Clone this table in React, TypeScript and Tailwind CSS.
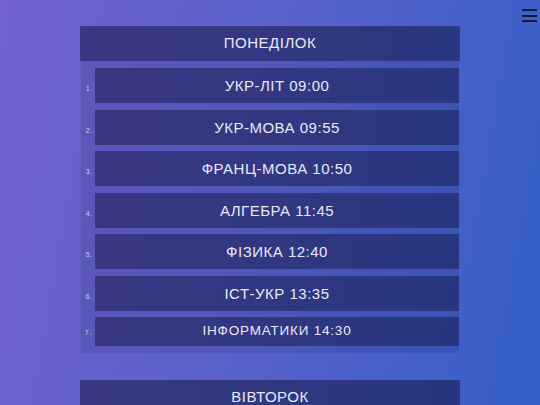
const days = [
  {
    name: "ПОНЕДІЛОК",
    lessons: [
      "УКР-ЛІТ 09:00",
      "УКР-МОВА 09:55",
      "ФРАНЦ-МОВА 10:50",
      "АЛГЕБРА 11:45",
      "ФІЗИКА 12:40",
      "ІСТ-УКР 13:35",
      "ІНФОРМАТИКИ 14:30",
    ],
  },
  {
    name: "ВІВТОРОК",
    lessons: ["ГЕОМЕТРІЯ 09:00", "АНГЛ-МОВА 09:55", "ХІМІЯ 10:50", "БІОЛОГІЯ 11:45"],
  },
]

function Menu() {
  return (
    <button className="fixed top-[9px] right-[3px] flex w-[15px] flex-col gap-[3.5px]">
      <span className="h-[2px] w-full bg-[#16183d]" />
      <span className="h-[2px] w-full bg-[#16183d]" />
      <span className="h-[2px] w-full bg-[#16183d]" />
    </button>
  )
}

export default function App() {
  return (
    <div
      className="min-h-screen w-full bg-[linear-gradient(100deg,#7262cf_0%,#5a62cc_45%,#2f5ec8_100%)] pt-[26px] pb-10 text-[#e9e9f6]"
      style={{ fontFamily: '"Liberation Sans", Arial, sans-serif' }}
    >
      <Menu />
      <div className="mx-auto flex w-[380px] flex-col gap-[26px]">
        {days.map((day) => (
          <section key={day.name} className="border border-white/5 bg-[#1a1a50]/15">
            <h2 className="flex h-[35px] items-center justify-center bg-[#15174a]/50 text-[15px] tracking-[0.5px] -mx-px -mt-px">
              {day.name}
            </h2>
            <ol className="flex list-decimal flex-col gap-[6.5px] pt-[7px] pb-[7px] pl-[14px]">
              {day.lessons.map((lesson, i) => {
                const last = i === 6
                return (
                  <li
                    key={lesson}
                    className={
                      "bg-[#15174a]/50 text-center tracking-[0.5px] marker:text-[7px] marker:text-white/70 " +
                      (last ? "h-[28.5px] leading-[28.5px] text-[13.5px] tracking-[0.8px]" : "h-[35px] leading-[35px] text-[15px]")
                    }
                  >
                    {lesson}
                  </li>
                )
              })}
            </ol>
          </section>
        ))}
      </div>
    </div>
  )
}
